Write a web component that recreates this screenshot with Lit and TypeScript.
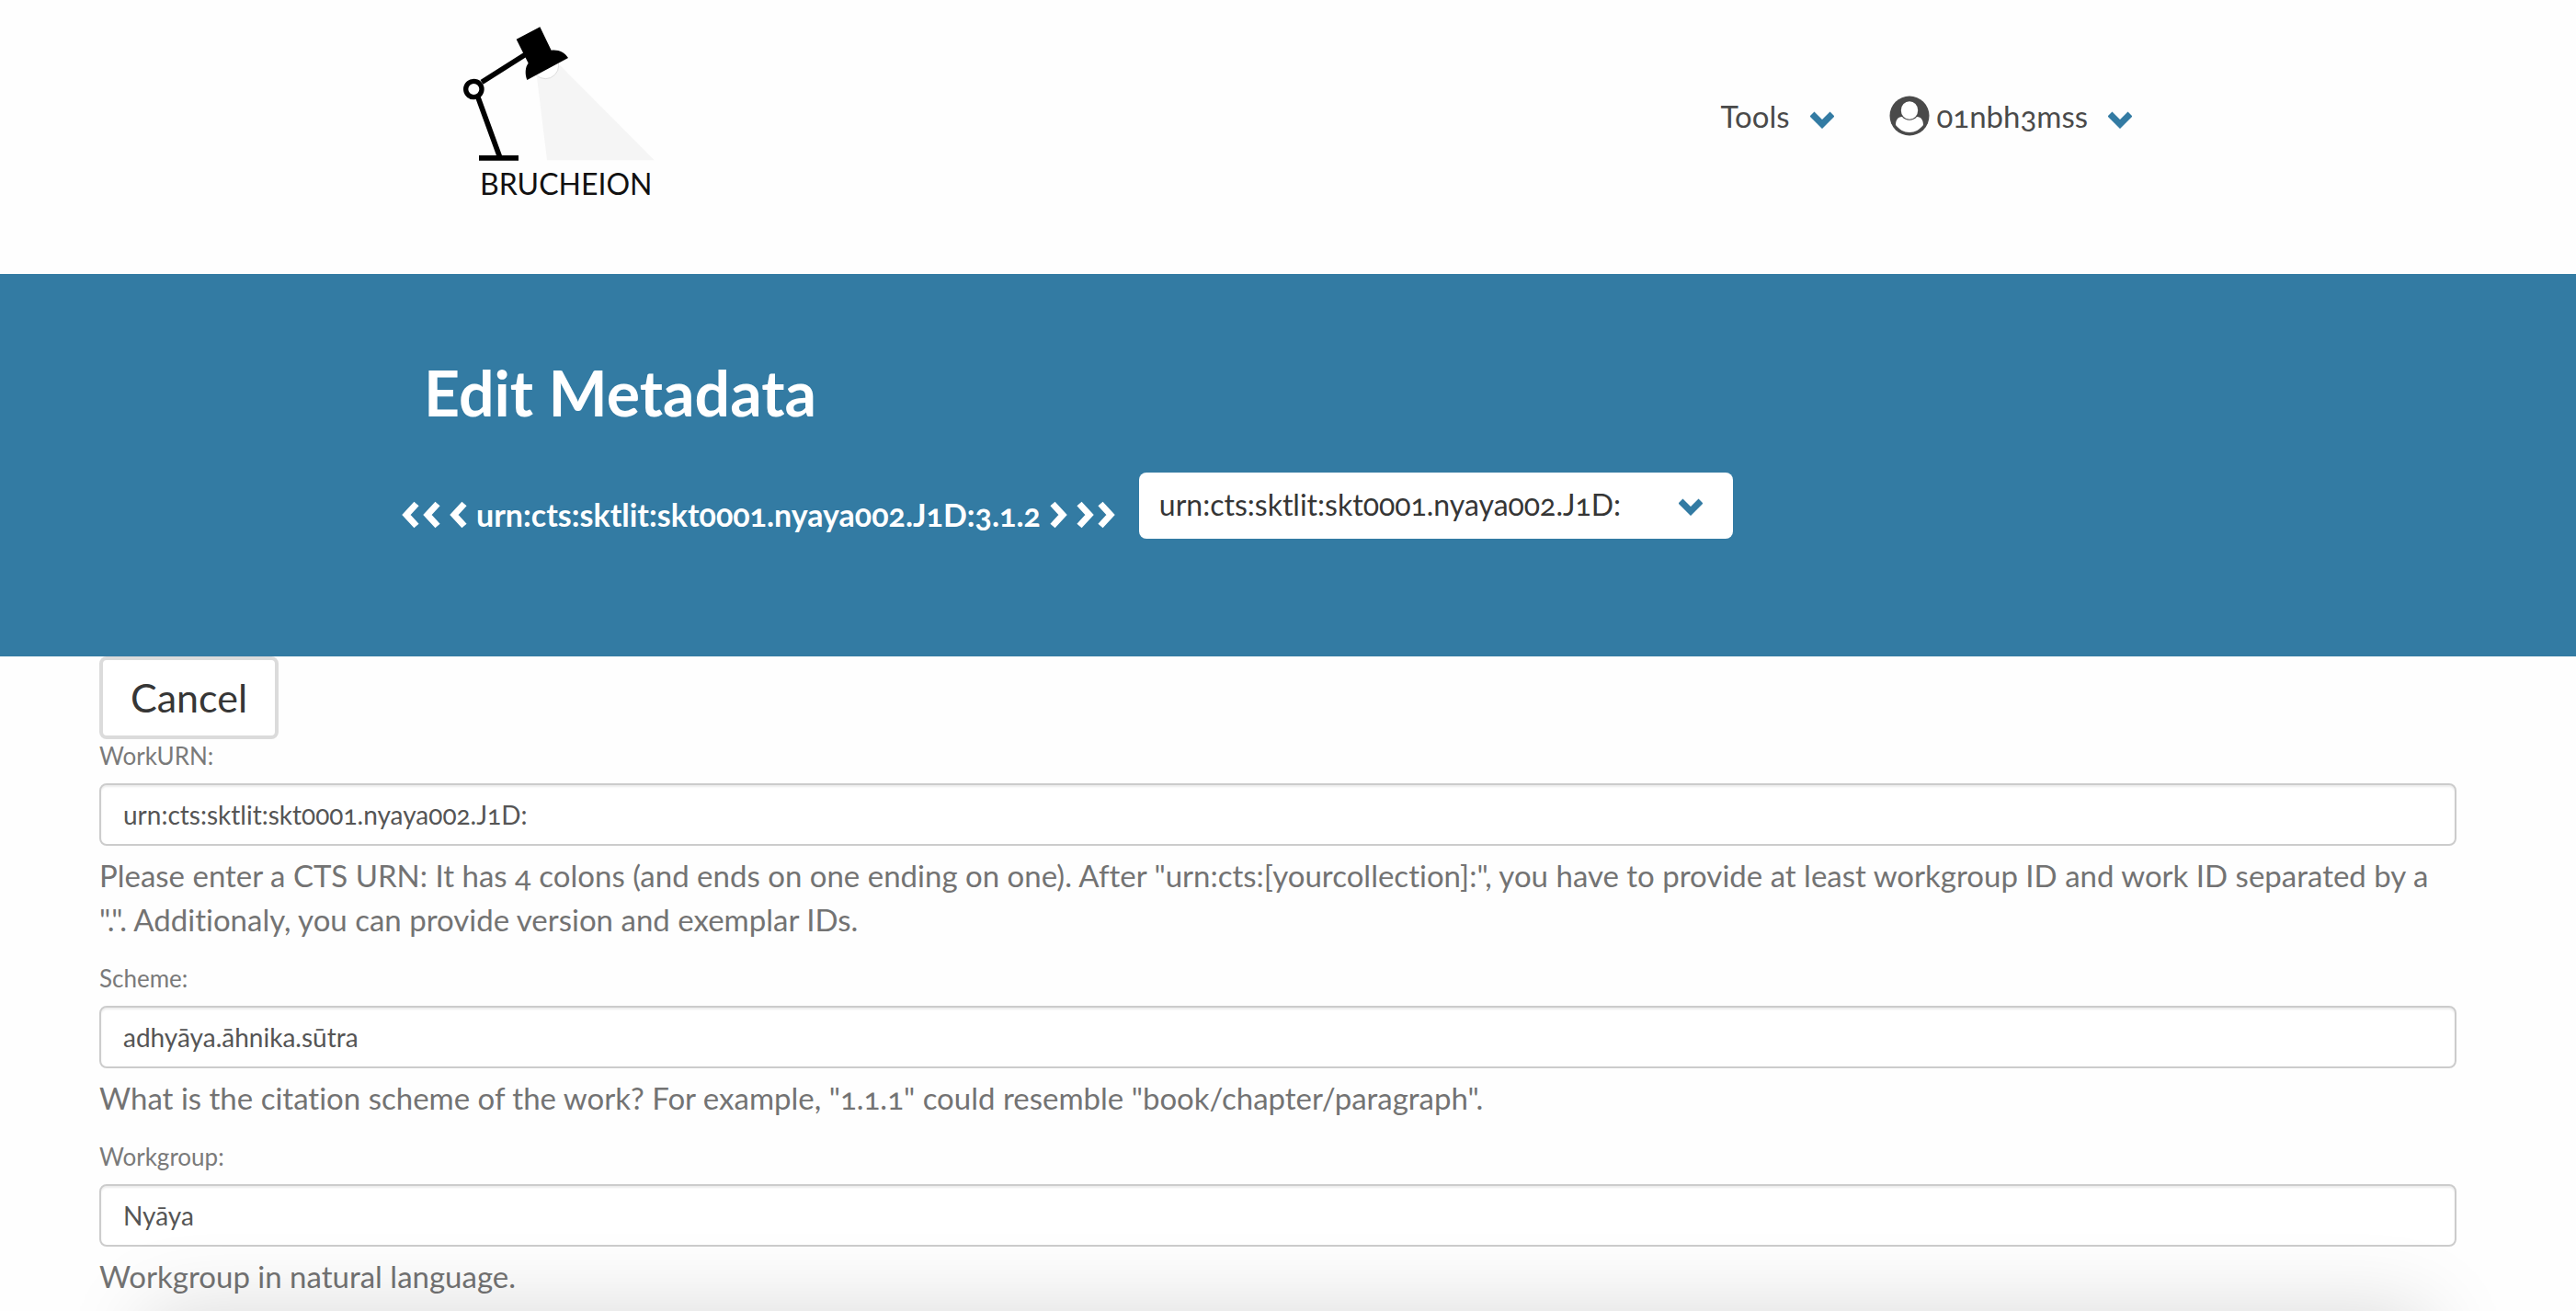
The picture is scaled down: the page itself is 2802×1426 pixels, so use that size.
import { LitElement, html, css, svg } from "lit";
import { customElement, property } from "lit/decorators.js";

@customElement("chevron-icon")
class ChevronIcon extends LitElement {
  @property() direction: "down" | "left" | "right" = "down";
  @property({ type: Number }) count = 1;

  static styles = css`
    :host {
      display: inline-flex;
      gap: 4px;
    }
    .glyph {
      display: block;
      fill: none;
      stroke: currentColor;
      stroke-width: 7;
    }
  `;

  render() {
    const down = this.direction === "down";
    const path = { down: "M2 3 L13 14 L24 3", left: "M16 3 L5 15 L16 27", right: "M3 3 L14 15 L3 27" }[this.direction];
    const [w, h] = down ? [26, 19] : [19, 30];
    return Array.from(
      { length: this.count },
      () => html`<svg class="glyph" width=${w} height=${h} viewBox="0 0 ${w} ${h}" aria-hidden="true">${svg`<path d=${path} />`}</svg>`
    );
  }
}

interface Field {
  id: string;
  label: string;
  value: string;
  help: string;
}

const FIELDS: Field[] = [
  {
    id: "workurn",
    label: "WorkURN:",
    value: "urn:cts:sktlit:skt0001.nyaya002.J1D:",
    help: 'Please enter a CTS URN: It has 4 colons (and ends on one ending on one). After "urn:cts:[yourcollection]:", you have to provide at least workgroup ID and work ID separated by a ".". Additionaly, you can provide version and exemplar IDs.',
  },
  {
    id: "scheme",
    label: "Scheme:",
    value: "adhyāya.āhnika.sūtra",
    help: 'What is the citation scheme of the work? For example, "1.1.1" could resemble "book/chapter/paragraph".',
  },
  { id: "workgroup", label: "Workgroup:", value: "Nyāya", help: "Workgroup in natural language." },
];

@customElement("app-root")
class AppRoot extends LitElement {
  static styles = css`
    :host {
      display: block;
      position: relative;
      min-height: 100vh;
      box-sizing: border-box;
      background: #fefefe;
      color: #4a4a4a;
      font-family: Lato, "Open Sans", sans-serif;
      font-variant-numeric: oldstyle-nums;
      font-variant-ligatures: none;
      font-size: 33px;
      line-height: 48px;
      --brand: #337ba3;
    }
    * {
      box-sizing: border-box;
    }
    a {
      color: inherit;
      text-decoration: none;
    }
    .container {
      max-width: 1920px;
      margin: 0 auto;
    }
    .header {
      display: flex;
      justify-content: space-between;
      align-items: flex-start;
      height: 298px;
      padding: 10px 42px 0 39px;
    }
    .logo {
      display: flex;
      flex-direction: column;
      color: #111;
    }
    .lamp {
      display: block;
      width: 260px;
      height: 172px;
    }
    .wordmark {
      padding-left: 42px;
      font-size: 32px;
      line-height: 36px;
    }
    .menu {
      display: flex;
      gap: 60px;
      padding-top: 92px;
    }
    .entry {
      display: flex;
      align-items: center;
      gap: 22px;
      padding: 0;
      border: 0;
      background: none;
      color: inherit;
      font: inherit;
    }
    .user {
      display: flex;
      align-items: center;
      gap: 8px;
    }
    .accent {
      color: var(--brand);
      padding-top: 8px;
    }
    .hero {
      background: var(--brand);
      color: #fff;
      padding: 93px 0 128px;
    }
    .title {
      margin: 0 0 51px;
      padding-left: 20px;
      font-size: 68px;
      line-height: 72px;
      font-weight: 700;
    }
    .row {
      display: flex;
      align-items: center;
      gap: 26px;
      margin-left: -4px;
    }
    .pager {
      display: flex;
      align-items: center;
      gap: 10px;
      padding-top: 20px;
      font-size: 34px;
      font-weight: 700;
    }
    .pager a {
      display: flex;
    }
    .picker {
      position: relative;
      flex: 0 1 646px;
    }
    .select {
      appearance: none;
      display: block;
      width: 100%;
      height: 72px;
      padding: 0 80px 2px 22px;
      border: 0;
      border-radius: 8px;
      background: #fff;
      color: #363636;
      font: inherit;
      font-size: 32px;
    }
    .caret {
      position: absolute;
      right: 33px;
      top: 28px;
      color: var(--brand);
      pointer-events: none;
    }
    .form {
      padding: 0 130px 0 108px;
    }
    .cancel {
      display: block;
      height: 90px;
      padding: 0 30px;
      border: 4px solid #dbdbdb;
      border-radius: 8px;
      background: #fff;
      color: #363636;
      font: inherit;
      font-size: 43px;
    }
    .field {
      margin-bottom: 22px;
    }
    .label {
      display: block;
      margin-bottom: 12px;
      color: #7a7a7a;
      font-size: 26px;
      line-height: 36px;
    }
    .input {
      display: block;
      width: 100%;
      height: 68px;
      padding: 0 24px;
      border: 2px solid #ccc;
      border-radius: 8px;
      background: #fff;
      box-shadow: inset 0 2px 2px rgba(0, 0, 0, 0.075);
      color: #555;
      font: inherit;
      font-size: 28px;
    }
    .help {
      margin: 8px 0 0;
      color: #737373;
    }
    .shade {
      position: absolute;
      left: 0;
      right: 0;
      bottom: 0;
      height: 90px;
      overflow: hidden;
      pointer-events: none;
    }
    .shade-edge {
      height: 200px;
      margin: 90px 160px 0;
      box-shadow: 0 0 90px rgba(0, 0, 0, 0.15);
    }
  `;

  private renderField(f: Field) {
    return html`
      <div class="field">
        <label class="label" for=${f.id}>${f.label}</label>
        <input class="input" id=${f.id} type="text" .value=${f.value} aria-describedby="${f.id}-help" />
        <p class="help" id="${f.id}-help">${f.help}</p>
      </div>
    `;
  }

  render() {
    return html`
      <header class="container header">
        <a class="logo" href="#">
          <svg class="lamp" viewBox="0 0 780 516" aria-hidden="true">
            <path d="M312 222 L388 184 L695 493 H345 Z" fill="#f5f5f5" />
            <circle cx="340" cy="184" r="43" fill="#fff" stroke="#ddd" stroke-width="3" />
            <path d="M245 98 L322 58 L359 134 C382 131 404 141 414 159 L280 231 C272 211 274 188 284 176 Z" fill="#000" />
            <path d="M132 238 L274 148 M120 288 L190 480" stroke="#000" stroke-width="17" />
            <circle cx="106" cy="261" r="26" fill="#fff" stroke="#000" stroke-width="16" />
            <path d="M123 477 H252 V494 H123 Z" fill="#000" />
          </svg>
          <span class="wordmark">BRUCHEION</span>
        </a>
        <nav class="menu">
          <button class="entry">Tools <chevron-icon class="accent"></chevron-icon></button>
          <button class="entry">
            <span class="user">
              <svg width="44" height="44" viewBox="0 0 44 44" aria-hidden="true">
                <circle cx="22" cy="22" r="21.5" fill="#4a4a4a" />
                <path d="M7 32 C7 27 9 23 14 23 C18 28 26 28 30 23 C35 23 37 27 37 32 C33 37 28 40 22 40 C16 40 11 37 7 32 Z" fill="#fff" />
                <ellipse cx="22" cy="16" rx="9.2" ry="9.8" fill="#fff" />
              </svg>
              01nbh3mss
            </span>
            <chevron-icon class="accent"></chevron-icon>
          </button>
        </nav>
      </header>
      <section class="hero">
        <div class="container">
          <h1 class="title">Edit Metadata</h1>
          <div class="row">
            <nav class="pager">
              <a href="#first" aria-label="First"><chevron-icon direction="left" count="2"></chevron-icon></a>
              <a href="#previous" aria-label="Previous"><chevron-icon direction="left"></chevron-icon></a>
              <span>urn:cts:sktlit:skt0001.nyaya002.J1D:3.1.2</span>
              <a href="#next" aria-label="Next"><chevron-icon direction="right"></chevron-icon></a>
              <a href="#last" aria-label="Last"><chevron-icon direction="right" count="2"></chevron-icon></a>
            </nav>
            <div class="picker">
              <select class="select" aria-label="Work">
                <option>urn:cts:sktlit:skt0001.nyaya002.J1D:</option>
              </select>
              <chevron-icon class="caret"></chevron-icon>
            </div>
          </div>
        </div>
      </section>
      <form class="form">
        <button class="cancel" type="button">Cancel</button>
        ${FIELDS.map((f) => this.renderField(f))}
      </form>
      <div class="shade"><div class="shade-edge"></div></div>
    `;
  }
}
